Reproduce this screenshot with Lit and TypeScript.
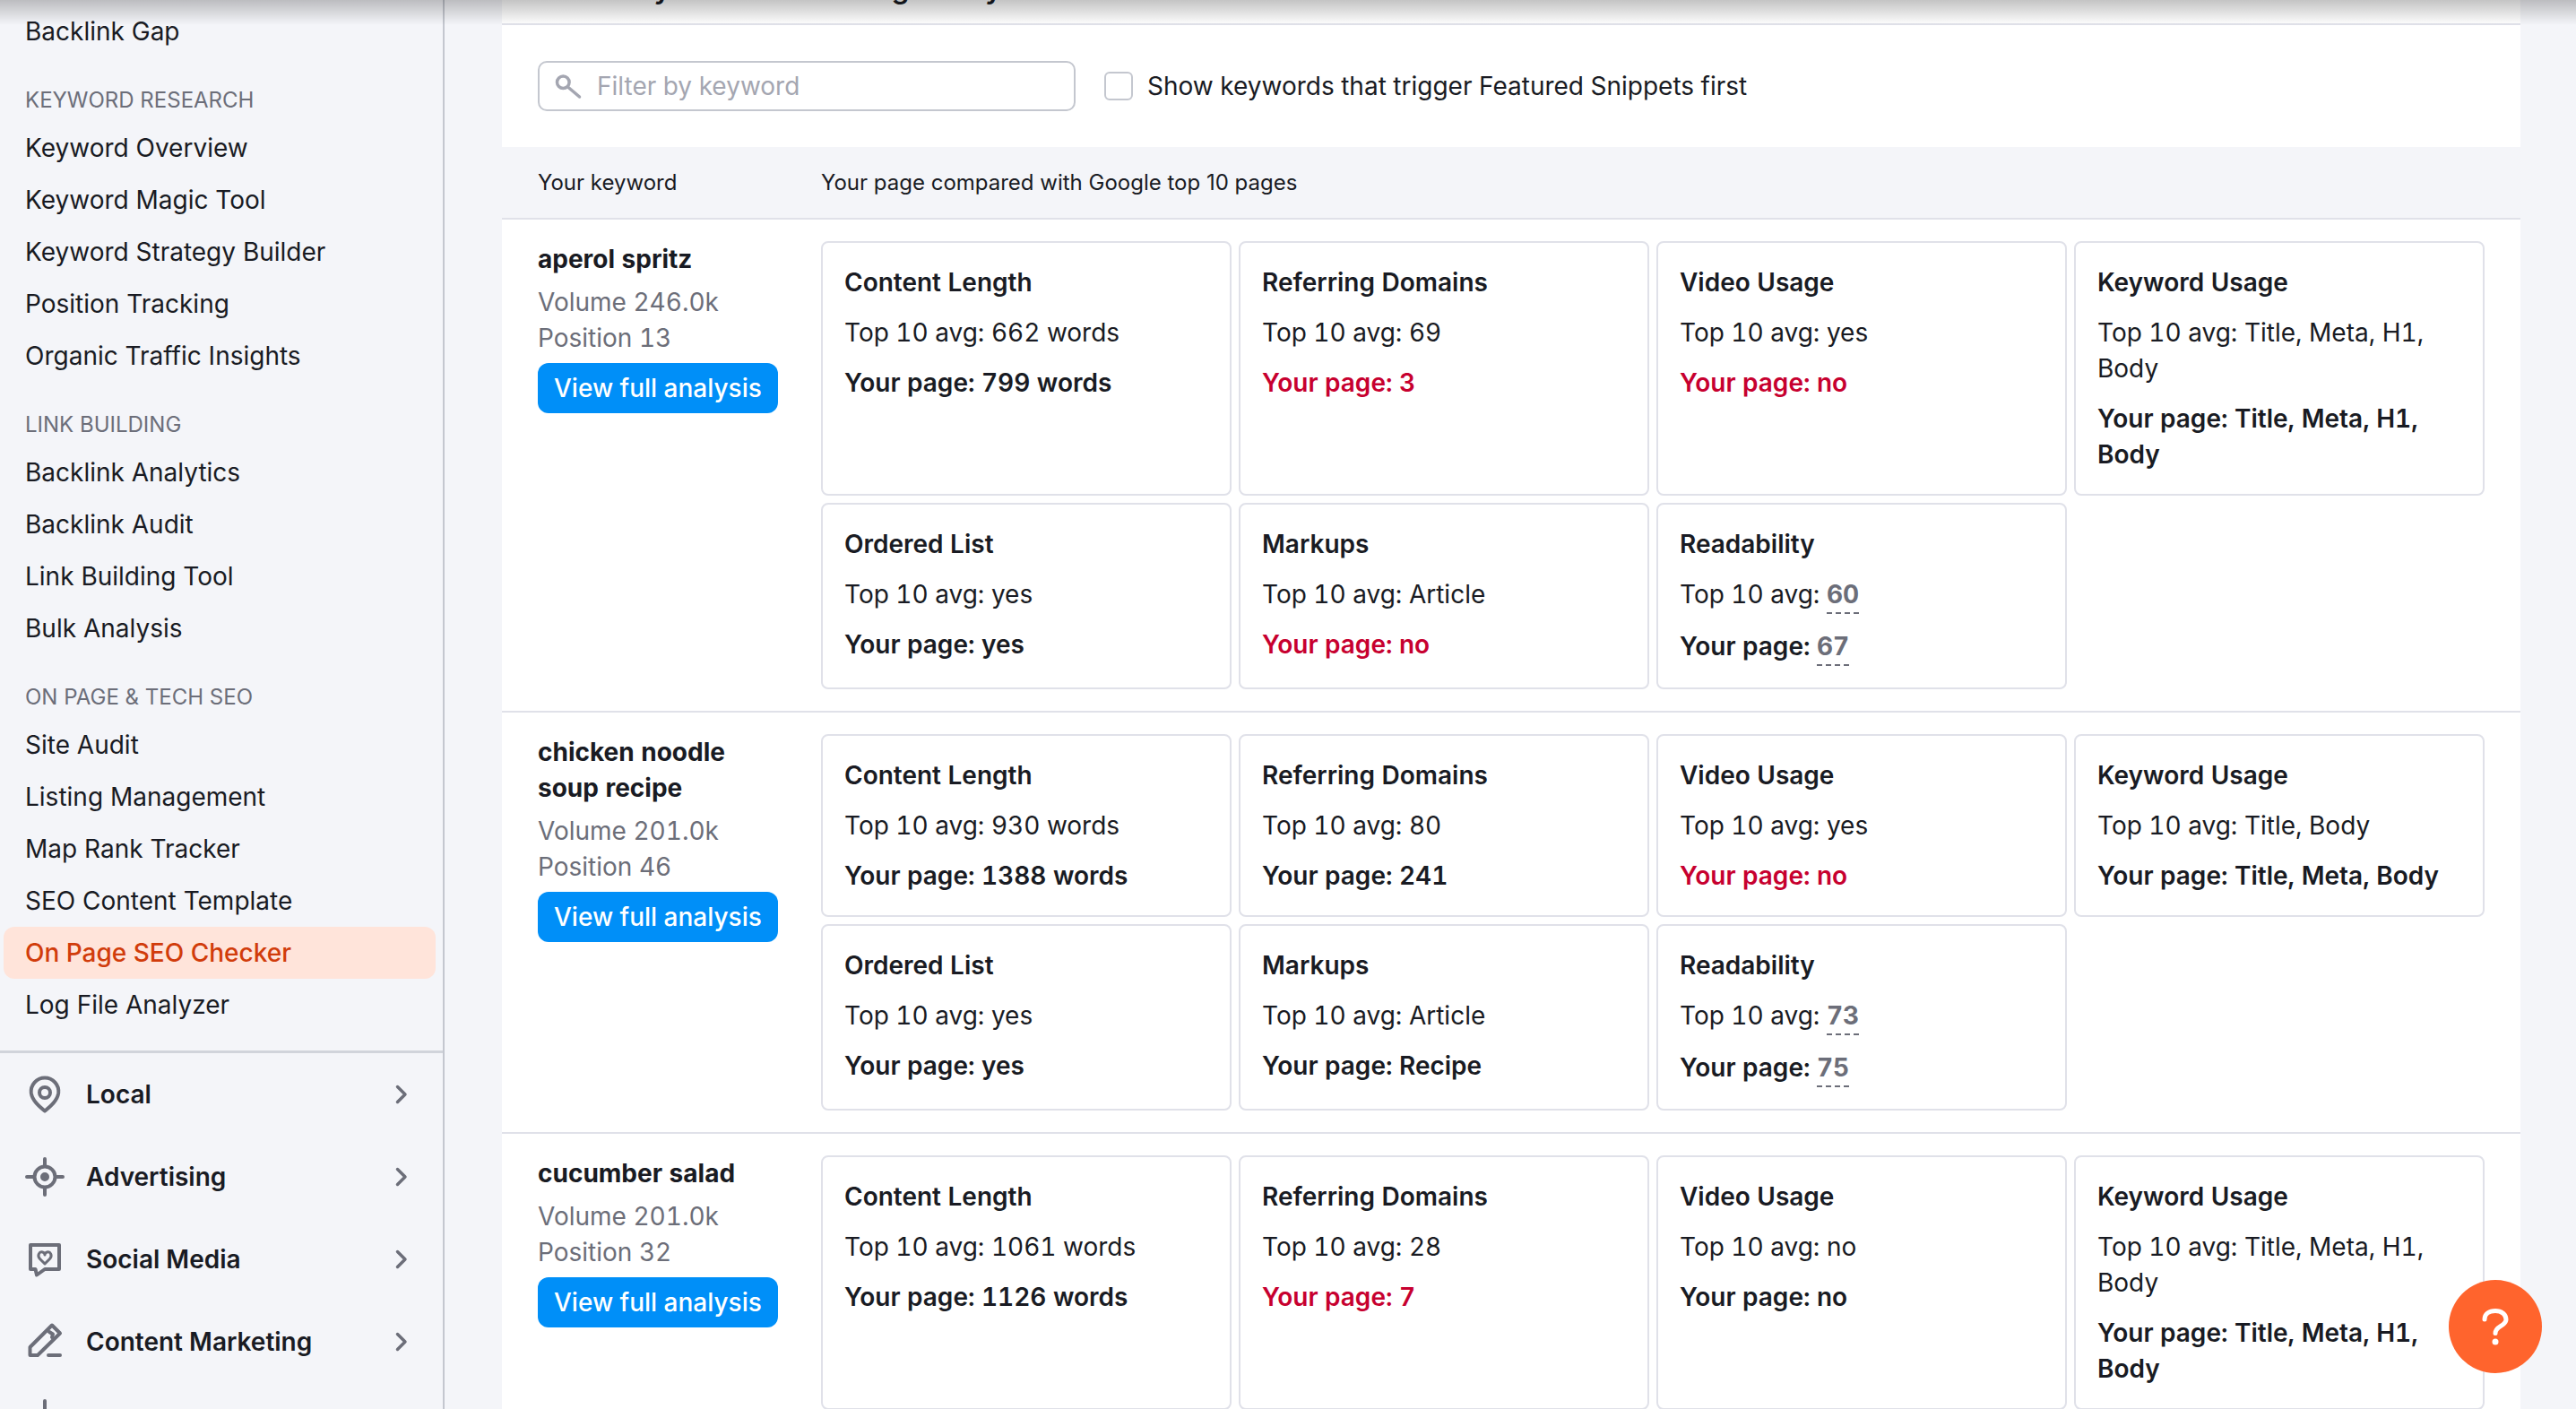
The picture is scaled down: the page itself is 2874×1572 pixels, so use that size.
import { LitElement, css, html, svg } from "lit";

type Tone = "bad" | "muted" | "";

interface Card {
  title: string;
  avg: string;
  page: string;
  tone?: Tone;
}

interface Row {
  keyword: string[];
  volume: string;
  position: string;
  cards: Card[];
}

const navGroups = [
  { label: "", items: ["Backlink Gap"] },
  {
    label: "Keyword research",
    items: [
      "Keyword Overview",
      "Keyword Magic Tool",
      "Keyword Strategy Builder",
      "Position Tracking",
      "Organic Traffic Insights",
    ],
  },
  {
    label: "Link building",
    items: ["Backlink Analytics", "Backlink Audit", "Link Building Tool", "Bulk Analysis"],
  },
  {
    label: "On page & tech SEO",
    items: [
      "Site Audit",
      "Listing Management",
      "Map Rank Tracker",
      "SEO Content Template",
      "On Page SEO Checker",
      "Log File Analyzer",
    ],
  },
];

const icons = {
  local: svg`<path d="M22 40.5C16 35.5 8 29 6.8 20.5A15.3 15.3 0 1 1 37.2 20.5C36 29 28 35.5 22 40.5Z"/><circle cx="22" cy="20" r="6"/>`,
  ads: svg`<circle cx="22" cy="22" r="11.5"/><circle cx="22" cy="22" r="3" fill="#6c6e79"/><path d="M22 2V10M22 34V42M2 22H10M34 22H42"/>`,
  social: svg`<path d="M6 6H38V33H22L13 39.5L11.5 33H6Z"/><path d="M22 27L16.5 21.5C13 17.5 16 13 19.5 14C20.8 14.4 22 15.6 22 17C22 15.6 23.2 14.4 24.500 14C28 13 31 17.5 27.500 21.500Z" stroke-width="3"/>`,
  content: svg`<path d="M5.500 28L30 3.500L39 12.500L14 37H5.500Z"/><path d="M27 11L31 13.500L30 17"/><path d="M26 37H39"/>`,
  trends: svg`<path d="M22 -4V8"/>`,
};

const tools: { label: string; icon: keyof typeof icons }[] = [
  { label: "Local", icon: "local" },
  { label: "Advertising", icon: "ads" },
  { label: "Social Media", icon: "social" },
  { label: "Content Marketing", icon: "content" },
  { label: ".Trends", icon: "trends" },
];

const rows: Row[] = [
  {
    keyword: ["aperol spritz"],
    volume: "246.0k",
    position: "13",
    cards: [
      { title: "Content Length", avg: "662 words", page: "799 words" },
      { title: "Referring Domains", avg: "69", page: "3", tone: "bad" },
      { title: "Video Usage", avg: "yes", page: "no", tone: "bad" },
      { title: "Keyword Usage", avg: "Title, Meta, H1, Body", page: "Title, Meta, H1, Body" },
      { title: "Ordered List", avg: "yes", page: "yes" },
      { title: "Markups", avg: "Article", page: "no", tone: "bad" },
      { title: "Readability", avg: "60", page: "67", tone: "muted" },
    ],
  },
  {
    keyword: ["chicken noodle", "soup recipe"],
    volume: "201.0k",
    position: "46",
    cards: [
      { title: "Content Length", avg: "930 words", page: "1388 words" },
      { title: "Referring Domains", avg: "80", page: "241" },
      { title: "Video Usage", avg: "yes", page: "no", tone: "bad" },
      { title: "Keyword Usage", avg: "Title, Body", page: "Title, Meta, Body" },
      { title: "Ordered List", avg: "yes", page: "yes" },
      { title: "Markups", avg: "Article", page: "Recipe" },
      { title: "Readability", avg: "73", page: "75", tone: "muted" },
    ],
  },
  {
    keyword: ["cucumber salad"],
    volume: "201.0k",
    position: "32",
    cards: [
      { title: "Content Length", avg: "1061 words", page: "1126 words" },
      { title: "Referring Domains", avg: "28", page: "7", tone: "bad" },
      { title: "Video Usage", avg: "no", page: "no" },
      { title: "Keyword Usage", avg: "Title, Meta, H1, Body", page: "Title, Meta, H1, Body" },
    ],
  },
];

export class AppRoot extends LitElement {
  renderCard(card: Card) {
    if (card.tone === "muted") {
      return html`
        <div class="card">
          <div class="card-title">${card.title}</div>
          <div>Top 10 avg: <span class="score">${card.avg}</span></div>
          <div class="strong">Your page: <span class="score">${card.page}</span></div>
        </div>
      `;
    }
    return html`
      <div class="card">
        <div class="card-title">${card.title}</div>
        <div>Top 10 avg: ${card.avg}</div>
        <div class="strong ${card.tone === "bad" ? "bad" : ""}">Your page: ${card.page}</div>
      </div>
    `;
  }

  render() {
    return html`
      <div class="page">
        <aside class="sidebar">
          <nav class="groups">
            ${navGroups.map(
              (group) => html`
                ${group.label ? html`<div class="group-label">${group.label}</div>` : ""}
                ${group.items.map(
                  (item) => html`
                    <div class="nav-item ${item === "On Page SEO Checker" ? "active" : ""}">${item}</div>
                  `
                )}
              `
            )}
          </nav>
          <div class="tools">
            ${tools.map(
              (tool) => html`
                <div class="tool">
                  <svg class="tool-icon" viewBox="0 0 44 44">${icons[tool.icon]}</svg>
                  <span class="tool-label">${tool.label}</span>
                  <svg class="chevron" viewBox="0 0 16 24"><path d="M3.500 3.500L12 12L3.500 20.500" /></svg>
                </div>
              `
            )}
          </div>
        </aside>

        <main class="main">
          <div class="heading-strip">
            <div class="heading">Summary for Your Ranking Today</div>
          </div>
          <div class="filters">
            <div class="search">
              <svg class="search-icon" viewBox="0 0 34 34">
                <circle cx="12.300" cy="12.700" r="6.800" />
                <path d="M17.500 18L30.500 29" />
              </svg>
              <span>Filter by keyword</span>
            </div>
            <label class="check">
              <span class="box"></span>
              Show keywords that trigger Featured Snippets first
            </label>
          </div>
          <div class="table-head">
            <span>Your keyword</span>
            <span>Your page compared with Google top 10 pages</span>
          </div>
          ${rows.map(
            (row) => html`
              <section class="row">
                <div class="keyword">
                  <div class="keyword-name">${row.keyword.map((line) => html`<div>${line}</div>`)}</div>
                  <div class="keyword-meta">
                    <div>Volume ${row.volume}</div>
                    <div>Position ${row.position}</div>
                  </div>
                  <button class="analysis">View full analysis</button>
                </div>
                <div class="cards">${row.cards.map((card) => this.renderCard(card))}</div>
              </section>
            `
          )}
        </main>
      </div>

      <div class="top-shade"></div>
      <div class="help">
        <svg viewBox="0 0 104 104">
          <path d="M40 44C40 38 45 34.500 52 34.500C59 34.500 64 38.500 64 44C64 52 52 51 52 59.500" />
          <circle cx="52" cy="69" r="3.500" />
        </svg>
      </div>
    `;
  }

  static styles = css`
    :host {
      display: block;
      position: relative;
      height: 1572px;
      overflow: hidden;
      background: #f4f5f9;
      color: #191b23;
      font-family: Inter, "Liberation Sans", sans-serif;
      font-size: 28px;
      line-height: 40px;
    }
    .page {
      display: grid;
      grid-template-columns: 496px 1fr;
      height: 1572px;
    }

    .sidebar {
      border-right: 2px solid #c4c7cf;
      padding-top: 6px;
      overflow: hidden;
    }
    .groups {
      padding: 0 8px 22px 4px;
      border-bottom: 3px solid #d1d4db;
      margin-right: 0;
    }
    .group-label {
      height: 32px;
      line-height: 32px;
      margin: 31.500px 0 8.500px 24px;
      font-size: 24px;
      color: #6c6e79;
      text-transform: uppercase;
    }
    .nav-item {
      height: 58px;
      line-height: 58px;
      padding-left: 24px;
      border-radius: 12px;
    }
    .nav-item.active {
      background: #ffe4da;
      color: #d13c0b;
      font-weight: 500;
    }
    .tool {
      display: flex;
      align-items: center;
      height: 92px;
      padding-left: 28px;
      font-weight: 600;
    }
    .tool-icon {
      width: 44px;
      height: 44px;
      flex: none;
      overflow: visible;
      fill: none;
      stroke: #6c6e79;
      stroke-width: 4;
      stroke-linecap: round;
      stroke-linejoin: round;
    }
    .tool-label {
      flex: 1;
      margin-left: 24px;
    }
    .chevron {
      width: 16px;
      height: 24px;
      margin-right: 38px;
      fill: none;
      stroke: #6c6e79;
      stroke-width: 3.500;
      stroke-linecap: round;
      stroke-linejoin: round;
    }

    .main {
      margin: 0 62px 0 64px;
      min-width: 0;
      font-variant-numeric: tabular-nums;
    }
    .heading-strip {
      height: 26px;
      overflow: hidden;
      background: #fff;
      border-bottom: 2px solid #e0e1e9;
    }
    .heading {
      margin: -33px 0 0 40px;
      font-size: 32px;
      font-weight: 600;
      white-space: nowrap;
    }
    .filters {
      display: flex;
      align-items: center;
      gap: 32px;
      height: 136px;
      padding: 0 40px;
      background: #fff;
    }
    .search {
      display: flex;
      align-items: center;
      box-sizing: border-box;
      width: 600px;
      height: 56px;
      padding-left: 14px;
      gap: 16px;
      border: 2px solid #c4c7cf;
      border-radius: 10px;
      color: #a4a6b1;
    }
    .search-icon {
      width: 34px;
      height: 34px;
      fill: none;
      stroke: #a4a6b1;
      stroke-width: 3.500;
      stroke-linecap: round;
    }
    .check {
      display: flex;
      align-items: center;
      gap: 16px;
    }
    .box {
      box-sizing: border-box;
      width: 32px;
      height: 32px;
      border: 2px solid #c4c7cf;
      border-radius: 6px;
    }
    .table-head {
      display: grid;
      grid-template-columns: 316px 1fr;
      align-items: center;
      height: 79px;
      padding: 0 40px;
      font-size: 24px;
      font-variant-numeric: normal;
      border-bottom: 2px solid #e0e1e9;
    }
    .row {
      display: grid;
      grid-template-columns: 316px 1fr;
      padding: 24px 40px;
      background: #fff;
      border-bottom: 2px solid #e0e1e9;
    }
    .keyword-name {
      font-weight: 700;
    }
    .keyword-meta {
      margin: 8px 0;
      color: #6c6e79;
    }
    .analysis {
      display: block;
      height: 56px;
      padding: 0 18px;
      border: 0;
      border-radius: 12px;
      background: #008ff8;
      color: #fff;
      font: 500 28px/56px Inter, "Liberation Sans", sans-serif;
    }
    .cards {
      display: grid;
      grid-template-columns: repeat(4, 458px);
      gap: 8px;
    }
    .card {
      display: flex;
      flex-direction: column;
      gap: 16px;
      padding: 24px;
      border: 2px solid #e0e1e9;
      border-radius: 8px;
    }
    .card-title,
    .strong {
      font-weight: 600;
    }
    .bad {
      color: #c7002f;
    }
    .score {
      display: inline-block;
      color: #6c6e79;
      font-weight: 700;
      border-bottom: 2px dashed #6c6e79;
    }

    .top-shade {
      position: absolute;
      top: 0;
      left: 0;
      right: 0;
      height: 28px;
      background: linear-gradient(rgba(0, 0, 0, 0.23), rgba(0, 0, 0, 0));
      pointer-events: none;
    }
    .help {
      position: absolute;
      left: 2732px;
      top: 1428px;
      width: 104px;
      height: 104px;
      border-radius: 50%;
      background: #ff642d;
    }
    .help svg {
      display: block;
      fill: none;
      stroke: #fff;
      stroke-width: 5;
      stroke-linecap: round;
    }
    .help circle {
      fill: #fff;
      stroke: none;
    }
  `;
}

customElements.define("app-root", AppRoot);
